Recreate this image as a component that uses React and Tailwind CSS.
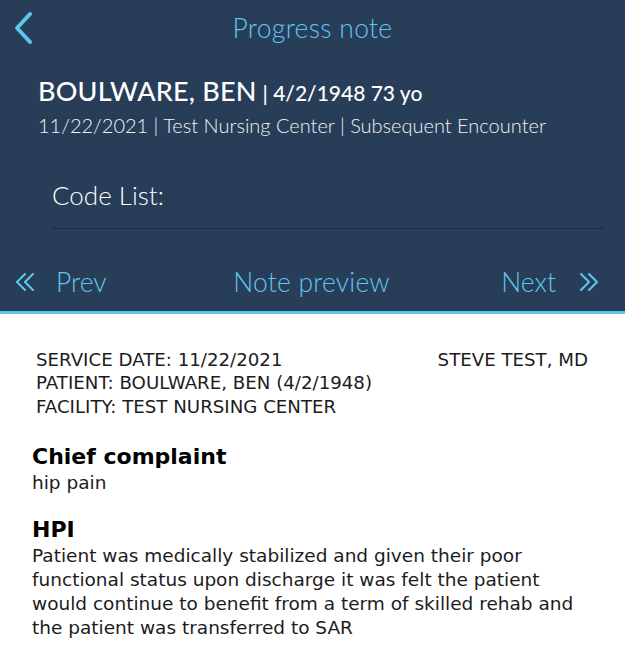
import React from "react";

function ChevronLeft() {
  return (
    <svg width="22" height="34" viewBox="0 0 22 34" fill="none">
      <path d="M17 3 L4 17 L17 31" stroke="#5ec6ee" strokeWidth="4" strokeLinecap="round" strokeLinejoin="round" />
    </svg>
  );
}

function DoubleChevron({ dir }) {
  const d =
    dir === "left"
      ? ["M10 1 L2 9 L10 17", "M18 1 L10 9 L18 17"]
      : ["M2 1 L10 9 L2 17", "M10 1 L18 9 L10 17"];
  return (
    <svg width="20" height="18" viewBox="0 0 20 18" fill="none">
      {d.map((p) => (
        <path key={p} d={p} stroke="#5ec6ee" strokeWidth="2" strokeLinecap="round" strokeLinejoin="round" />
      ))}
    </svg>
  );
}

export default function App() {
  const head = { fontFamily: "Lato, 'Open Sans', sans-serif" };
  const note = { fontFamily: "'DejaVu Sans', sans-serif" };
  return (
    <div className="w-[625px] h-[656px] bg-white overflow-hidden">
      <div className="bg-[#283d57] border-b-[3px] border-[#5ec6ee]" style={head}>
        <div className="relative h-[57px] flex items-center justify-center">
          <div className="absolute left-[13px] top-[11px]">
            <ChevronLeft />
          </div>
          <h1 className="text-[26.5px] font-light text-[#5ec6ee] tracking-[0.3px]">Progress note</h1>
        </div>
        <div className="pl-[38px] pt-[14px]">
          <div className="flex items-baseline text-white">
            <span className="text-[27px] font-medium tracking-[0.2px]">BOULWARE, BEN</span>
            <span className="text-[21px] font-medium ml-[6px]">| 4/2/1948 73 yo</span>
          </div>
          <p className="text-[20px] font-light text-[#f0f2f5] -mt-[2px]">
            11/22/2021 | Test Nursing Center | Subsequent Encounter
          </p>
        </div>
        <div className="ml-[52px] mr-[21px] mt-[38px] pb-[16px] border-b border-[#1b2b3e]">
          <p className="text-[26px] font-light text-white leading-[34px]">Code List:</p>
        </div>
        <div className="flex items-center pt-[38px] pb-[13px] px-[15px] text-[26.5px] font-light text-[#5ec6ee] leading-[31px]">
          <div className="flex-1 flex items-center gap-[21px]">
            <DoubleChevron dir="left" />
            <span>Prev</span>
          </div>
          <span className="ml-[9px] tracking-[0.2px]">Note preview</span>
          <div className="flex-1 flex items-center justify-end gap-[23px] pr-[11px]">
            <span>Next</span>
            <DoubleChevron dir="right" />
          </div>
        </div>
      </div>
      <div className="px-[32px] pt-[34px] text-[#1c1c1c]" style={note}>
        <div className="flex justify-between pl-[4px] pr-[5px] text-[18.2px] leading-[23.5px]">
          <div>
            <p>SERVICE DATE: 11/22/2021</p>
            <p>PATIENT: BOULWARE, BEN (4/2/1948)</p>
            <p>FACILITY: TEST NURSING CENTER</p>
          </div>
          <p>STEVE TEST, MD</p>
        </div>
        <div className="mt-[25px]">
          <h2 className="text-[22px] font-bold leading-[28px] text-black">Chief complaint</h2>
          <p className="text-[18.5px] leading-[24px]">hip pain</p>
          <h2 className="text-[22px] font-bold leading-[28px] text-black mt-[21px]">HPI</h2>
          <p className="text-[18.5px] leading-[24px]">
            Patient was medically stabilized and given their poor functional status upon discharge it was felt the patient
            would continue to benefit from a term of skilled rehab and the patient was transferred to SAR
          </p>
        </div>
      </div>
    </div>
  );
}
